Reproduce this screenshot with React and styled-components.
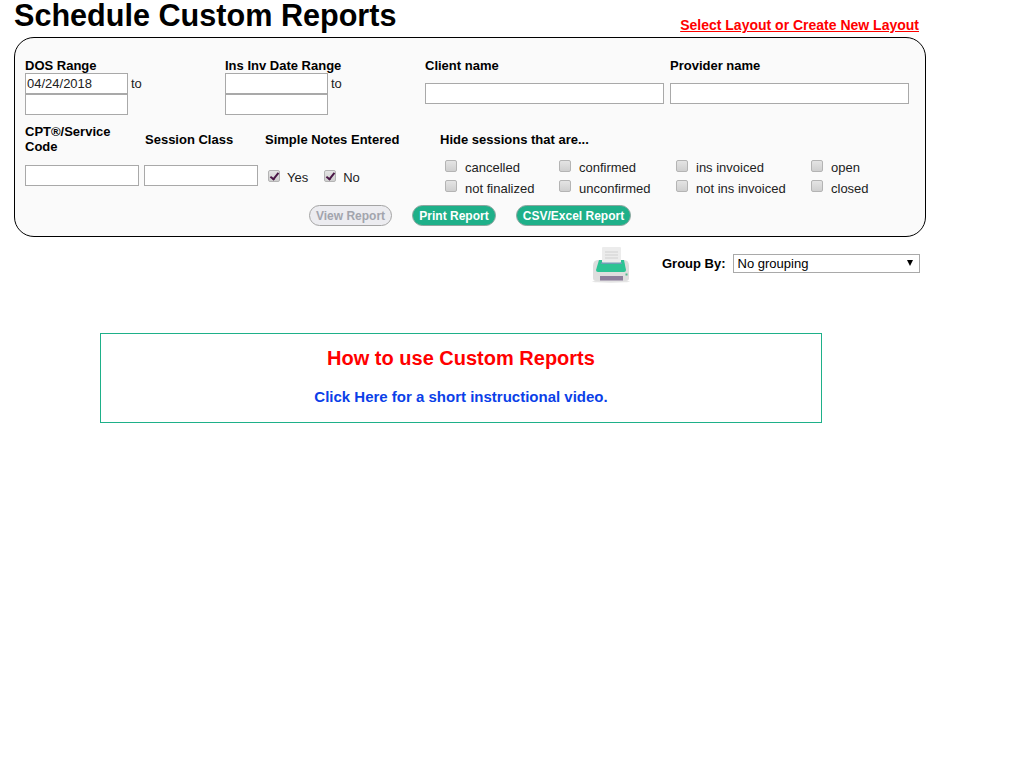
import React from 'react';
import styled, { createGlobalStyle } from 'styled-components';

const GlobalStyle = createGlobalStyle`
  html, body {
    margin: 0;
    background: #fff;
    font-family: "Liberation Sans", Arial, sans-serif;
    font-size: 13px;
    color: #000;
  }
`;

const Page = styled.div`
  width: 912px;
  margin-left: 14px;
`;

const Header = styled.div`
  display: flex;
  justify-content: space-between;
  align-items: flex-end;
  height: 37px;
  padding-right: 7px;
`;

const Title = styled.h1`
  margin: 0;
  font-size: 30.6px;
  line-height: 30px;
  font-weight: bold;
  align-self: flex-start;
`;

const LayoutLink = styled.a`
  color: #f00;
  font-size: 14px;
  line-height: 16px;
  font-weight: bold;
  text-decoration: underline;
  margin-bottom: 4px;
`;

const Panel = styled.div`
  box-sizing: border-box;
  height: 200px;
  border: 1px solid #000;
  border-radius: 20px;
  background: #fafafa;
  padding: 20px 0 0 10px;
`;

const TopRow = styled.div`
  display: grid;
  grid-template-columns: 200px 200px 245px 239px;
  height: 66px;
`;

const Label = styled.div`
  font-weight: bold;
  font-size: 13px;
  line-height: 15px;
`;

const DateGrid = styled.div`
  display: grid;
  grid-template-columns: 103px auto;
  column-gap: 3px;
  justify-content: start;
  align-items: start;
`;

const TextInput = styled.input`
  display: block;
  box-sizing: border-box;
  width: ${(p) => p.$w}px;
  height: 21px;
  margin: ${(p) => p.$top || 0}px 0 0;
  padding: 0 1px;
  border: 1px solid #a9a9a9;
  background: #fff;
  font-family: inherit;
  font-size: 13px;
  color: #222;
  outline: none;
`;

const To = styled.span`
  line-height: 21px;
  color: #222;
`;

const BottomRow = styled.div`
  display: grid;
  grid-template-columns: 120px 120px 175px auto;
  height: 81px;
`;

const Column = styled.div`
  display: flex;
  flex-direction: column;
`;

const LabelSlot = styled.div`
  display: flex;
  align-items: center;
  height: 30px;
`;

const InputSlot = styled.div`
  margin: 11px 0 0 ${(p) => p.$left || 0}px;
`;

const YesNo = styled.div`
  display: flex;
  align-items: center;
  gap: 16px;
  margin: 16px 0 0 3px;
`;

const Check = styled.label`
  display: flex;
  align-items: center;
  gap: ${(p) => p.$gap || 7}px;
  line-height: 15px;
  color: #222;
`;

const Box = styled.input.attrs({ type: 'checkbox' })`
  appearance: none;
  position: relative;
  top: ${(p) => p.$up || 0}px;
  box-sizing: border-box;
  width: 12px;
  height: 12px;
  margin: 0;
  border: 1px solid #b4b4b4;
  border-radius: 2px;
  background: linear-gradient(#e4e4e4, #cfcfcf);

  &:checked::after {
    content: '';
    position: absolute;
    left: 3px;
    top: 0;
    width: 3px;
    height: 7px;
    border: solid #4a1746;
    border-width: 0 2px 2px 0;
    transform: rotate(38deg);
  }
`;

const HideGrid = styled.div`
  display: grid;
  grid-template-columns: 114px 117px 135px auto;
  grid-auto-rows: 20.5px;
  margin: 3.5px 0 0 5px;
`;

const Buttons = styled.div`
  display: flex;
  gap: 20px;
  margin-left: 284px;
`;

const ReportButton = styled.button`
  box-sizing: border-box;
  height: 21px;
  width: ${(p) => p.$w}px;
  padding: 0;
  border: 1px solid ${(p) => (p.disabled ? '#a4a4a4' : '#8fa59f')};
  border-radius: 11px;
  background: ${(p) => (p.disabled ? '#ececf0' : '#1eb089')};
  color: ${(p) => (p.disabled ? '#a2a4ad' : '#fff')};
  font-family: inherit;
  font-size: 12px;
  font-weight: bold;
`;

const ToolRow = styled.div`
  display: flex;
  align-items: flex-start;
  height: 87px;
  padding: 9px 0 0 577px;
`;

const PrinterIcon = styled.svg`
  width: 40px;
  height: 38px;
  display: block;
  flex: none;
`;

const GroupBy = styled.div`
  display: flex;
  align-items: center;
  gap: 7px;
  margin: 8px 0 0 31px;
  font-weight: bold;
`;

const SelectWrap = styled.div`
  position: relative;
  width: 187px;

  &::after {
    content: '';
    position: absolute;
    right: 7px;
    top: 6px;
    border-left: 3.5px solid transparent;
    border-right: 3.5px solid transparent;
    border-top: 6px solid #000;
    pointer-events: none;
  }
`;

const Select = styled.select`
  display: block;
  appearance: none;
  box-sizing: border-box;
  width: 100%;
  height: 19px;
  padding: 0 4px;
  border: 1px solid #a9a9a9;
  border-radius: 0;
  background: #fff;
  font-family: inherit;
  font-size: 13px;
  color: #000;
`;

const HowTo = styled.div`
  box-sizing: border-box;
  width: 722px;
  height: 90px;
  margin-left: 86px;
  border: 1px solid #1eb089;
  text-align: center;
  padding-top: 13px;
`;

const HowToTitle = styled.h2`
  margin: 0;
  color: #f00;
  font-size: 20px;
  line-height: 23px;
  font-weight: bold;
`;

const VideoLink = styled.a`
  display: block;
  margin-top: 18px;
  color: #0b3fe8;
  font-size: 15px;
  line-height: 17px;
  font-weight: bold;
`;

const hideOptions = [
  'cancelled', 'confirmed', 'ins invoiced', 'open',
  'not finalized', 'unconfirmed', 'not ins invoiced', 'closed',
];

const Printer = () => (
  <PrinterIcon viewBox="0 0 40 38">
    <ellipse cx="20" cy="35.5" rx="19" ry="1.2" fill="#e4e4e4" />
    <path d="M2 20q0-6 5-6h26q5 0 5 6v12q0 3-3 3H5q-3 0-3-3z" fill="#dedede" />
    <path d="M8 14h25l2 10q0 2-2 2H7q-2 0-2-2z" fill="#2dc394" />
    <rect x="11" y="1" width="19" height="16" rx="1" fill="#ececec" />
    <path d="M14 6h13M14 9h13M14 12h13" stroke="#d0d0d0" strokeWidth="1" />
    <rect x="10" y="16.5" width="21" height="1.5" fill="#6f9fb5" />
    <rect x="9" y="30" width="23" height="4.5" fill="#8d7f9c" />
    <rect x="34.5" y="27.5" width="2" height="2" fill="#4fb98c" />
  </PrinterIcon>
);

export default function App() {
  return (
    <Page>
      <GlobalStyle />
      <Header>
        <Title>Schedule Custom Reports</Title>
        <LayoutLink href="#">Select Layout or Create New Layout</LayoutLink>
      </Header>

      <Panel>
        <TopRow>
          <div>
            <Label>DOS Range</Label>
            <DateGrid>
              <TextInput $w={103} defaultValue="04/24/2018" />
              <To>to</To>
              <TextInput $w={103} />
            </DateGrid>
          </div>
          <div>
            <Label>Ins Inv Date Range</Label>
            <DateGrid>
              <TextInput $w={103} />
              <To>to</To>
              <TextInput $w={103} />
            </DateGrid>
          </div>
          <div>
            <Label>Client name</Label>
            <TextInput $w={239} $top={10} />
          </div>
          <div>
            <Label>Provider name</Label>
            <TextInput $w={239} $top={10} />
          </div>
        </TopRow>

        <BottomRow>
          <Column>
            <LabelSlot><Label>CPT®/Service<br />Code</Label></LabelSlot>
            <InputSlot><TextInput $w={114} /></InputSlot>
          </Column>
          <Column>
            <LabelSlot><Label>Session Class</Label></LabelSlot>
            <InputSlot $left={-1}><TextInput $w={114} /></InputSlot>
          </Column>
          <Column>
            <LabelSlot><Label>Simple Notes Entered</Label></LabelSlot>
            <YesNo>
              <Check><Box defaultChecked $up={-2} />Yes</Check>
              <Check><Box defaultChecked $up={-2} />No</Check>
            </YesNo>
          </Column>
          <Column>
            <LabelSlot><Label>Hide sessions that are...</Label></LabelSlot>
            <HideGrid>
              {hideOptions.map((name) => (
                <Check key={name} $gap={8}><Box $up={-2} />{name}</Check>
              ))}
            </HideGrid>
          </Column>
        </BottomRow>

        <Buttons>
          <ReportButton $w={83} disabled>View Report</ReportButton>
          <ReportButton $w={84}>Print Report</ReportButton>
          <ReportButton $w={115}>CSV/Excel Report</ReportButton>
        </Buttons>
      </Panel>

      <ToolRow>
        <Printer />
        <GroupBy>
          Group By:
          <SelectWrap>
            <Select defaultValue="none">
              <option value="none">No grouping</option>
            </Select>
          </SelectWrap>
        </GroupBy>
      </ToolRow>

      <HowTo>
        <HowToTitle>How to use Custom Reports</HowToTitle>
        <VideoLink>Click Here for a short instructional video.</VideoLink>
      </HowTo>
    </Page>
  );
}
